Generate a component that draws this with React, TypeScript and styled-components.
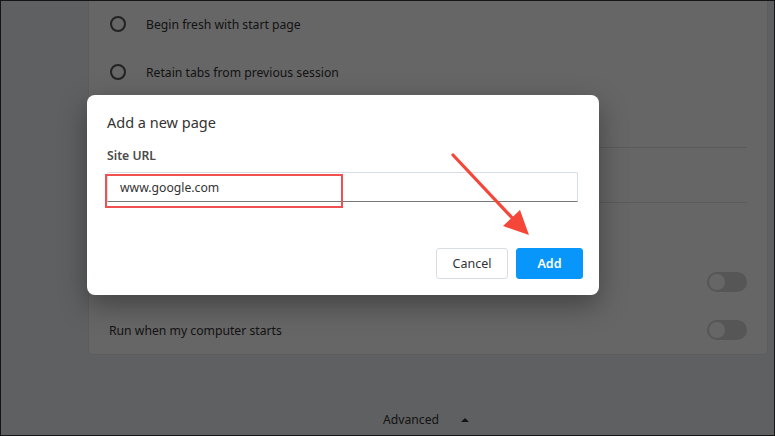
import React from "react";
import styled, { createGlobalStyle } from "styled-components";

const Global = createGlobalStyle`
  html, body { margin: 0; padding: 0; }
  body { font-family: "Noto Sans", "Open Sans", "Liberation Sans", sans-serif; }
  * { box-sizing: border-box; }
`;

const Root = styled.div`
  position: relative;
  width: 775px;
  height: 436px;
  overflow: hidden;
  border: 1px solid #151515;
  background: #eef0f2;
  display: flex;
  flex-direction: column;
`;

const Card = styled.section`
  margin-top: -1px;
  margin-left: 87px;
  width: 680px;
  background: #ffffff;
  border: 1px solid #e4e6e8;
  border-top: none;
  border-radius: 0 0 4px 4px;
  padding: 0 20px;
  display: flex;
  flex-direction: column;
`;

const Row = styled.div<{ $h?: number; $indent?: number }>`
  height: ${(p) => p.$h ?? 48}px;
  display: flex;
  align-items: center;
  justify-content: space-between;
  padding-left: ${(p) => p.$indent ?? 0}px;
  font-size: 12.2px;
  color: #333;
`;

const Left = styled.div`
  display: flex;
  align-items: center;
  gap: 20px;
`;

const Radio = styled.span`
  width: 16px;
  height: 16px;
  border-radius: 50%;
  border: 2px solid #555;
  flex-shrink: 0;
`;

const Divider = styled.div`
  height: 1px;
  background: #e2e4e6;
`;

const Toggle = styled.span`
  width: 40px;
  height: 20px;
  border-radius: 10px;
  background: #d6d6d6;
  position: relative;
  &::after {
    content: "";
    position: absolute;
    left: 2px;
    top: 2px;
    width: 16px;
    height: 16px;
    border-radius: 50%;
    background: #fff;
  }
`;

const AdvancedBar = styled.div`
  margin-top: 56px;
  margin-left: 85px;
  width: 680px;
  display: flex;
  justify-content: center;
  align-items: center;
  gap: 22px;
  font-size: 12.2px;
  color: #333;
`;

const Caret = styled.span`
  width: 0;
  height: 0;
  border-left: 4px solid transparent;
  border-right: 4px solid transparent;
  border-bottom: 4px solid #333;
`;

const Overlay = styled.div`
  position: absolute;
  inset: 0;
  background: rgba(0, 0, 0, 0.6);
`;

const Dialog = styled.div`
  position: absolute;
  left: 86px;
  top: 94px;
  width: 512px;
  height: 200px;
  background: #fff;
  border-radius: 8px;
  box-shadow: 0 10px 28px rgba(0, 0, 0, 0.35);
  padding: 17px 21px 16px 20px;
  display: flex;
  flex-direction: column;
`;

const Title = styled.h2`
  margin: 0;
  font-size: 14.5px;
  line-height: 20px;
  font-weight: 400;
  color: #333;
`;

const Label = styled.label`
  margin-top: 15px;
  font-size: 12.2px;
  line-height: 18px;
  font-weight: 600;
  color: #4a4a4a;
`;

const Input = styled.div`
  margin-top: 7px;
  height: 30px;
  border: 1px solid #d6dee4;
  border-bottom-color: #777;
  border-radius: 2px 2px 0 0;
  padding-left: 12px;
  display: flex;
  align-items: center;
  font-size: 12.2px;
  color: #333;
`;

const Actions = styled.div`
  margin-top: auto;
  margin-right: -5px;
  display: flex;
  justify-content: flex-end;
  gap: 8px;
`;

const Button = styled.button<{ $primary?: boolean }>`
  height: 31px;
  width: ${(p) => (p.$primary ? 67 : 72)}px;
  border-radius: 3px;
  font-family: inherit;
  font-size: 12.5px;
  border: 1px solid ${(p) => (p.$primary ? "#0896fb" : "#d6dee4")};
  background: ${(p) => (p.$primary ? "#0896fb" : "#fff")};
  color: ${(p) => (p.$primary ? "#fff" : "#333")};
  font-weight: ${(p) => (p.$primary ? 600 : 400)};
  cursor: pointer;
`;

const Highlight = styled.div`
  position: absolute;
  left: 18px;
  top: 79px;
  width: 238px;
  height: 34px;
  border: 2px solid #f05050;
  pointer-events: none;
`;

const ArrowSvg = styled.svg`
  position: absolute;
  left: 0;
  top: 0;
  pointer-events: none;
`;

export default function App() {
  return (
    <>
      <Global />
      <Root>
        <Card>
          <Row $indent={1}>
            <Left>
              <Radio />
              <span>Begin fresh with start page</span>
            </Left>
          </Row>
          <Row $indent={1}>
            <Left>
              <Radio />
              <span>Retain tabs from previous session</span>
            </Left>
          </Row>
          <Row $h={51} $indent={1}>
            <Left>
              <Radio />
            </Left>
          </Row>
          <Divider />
          <Row $h={54} />
          <Divider />
          <Row $h={55} />
          <Row>
            <span />
            <Toggle />
          </Row>
          <Row>
            <span>Run when my computer starts</span>
            <Toggle />
          </Row>
        </Card>
        <AdvancedBar>
          <span>Advanced</span>
          <Caret />
        </AdvancedBar>
        <Overlay />
        <Dialog>
          <Title>Add a new page</Title>
          <Label>Site URL</Label>
          <Input>www.google.com</Input>
          <Actions>
            <Button>Cancel</Button>
            <Button $primary>Add</Button>
          </Actions>
          <Highlight />
        </Dialog>
        <ArrowSvg width="775" height="436" viewBox="0 0 775 436">
          <line x1="452" y1="154" x2="516" y2="222" stroke="#f4473a" strokeWidth="3.2" strokeLinecap="round" />
          <polygon points="528,234 502,225 519,209" fill="#f4473a" />
        </ArrowSvg>
      </Root>
    </>
  );
}
